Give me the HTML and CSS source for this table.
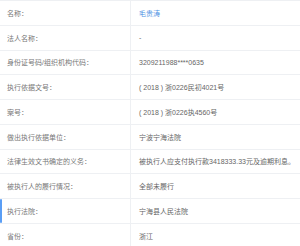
FILE: index.html
```html
<!DOCTYPE html>
<html lang="zh">
<head>
<meta charset="utf-8">
<link rel="stylesheet" href="styles.css">
</head>
<body>
<div class="table">
  <div class="row"><div class="label">名称：</div><div class="value"><a class="link">毛贵涛</a></div></div>
  <div class="row"><div class="label">法人名称：</div><div class="value">-</div></div>
  <div class="row"><div class="label">身份证号码/组织机构代码：</div><div class="value">3209211988****0635</div></div>
  <div class="row"><div class="label">执行依据文号：</div><div class="value">( 2018 ) 浙0226民初4021号</div></div>
  <div class="row"><div class="label">案号：</div><div class="value">( 2018 ) 浙0226执4560号</div></div>
  <div class="row"><div class="label">做出执行依据单位：</div><div class="value">宁波宁海法院</div></div>
  <div class="row"><div class="label">法律生效文书确定的义务：</div><div class="value">被执行人应支付执行款3418333.33元及逾期利息。</div></div>
  <div class="row"><div class="label">被执行人的履行情况：</div><div class="value">全部未履行</div></div>
  <div class="row active"><div class="label">执行法院：</div><div class="value">宁海县人民法院</div></div>
  <div class="row"><div class="label">省份：</div><div class="value">浙江</div></div>
</div>
</body>
</html>
```
FILE: styles.css
```css
html, body {
  margin: 0;
  padding: 0;
  background: #fff;
}
body {
  width: 300px;
  height: 246px;
  overflow: hidden;
  font-family: "Liberation Sans", "Noto Sans CJK SC", sans-serif;
  font-size: 7px;
  color: #666;
}
.table {
  display: flex;
  flex-direction: column;
}
.row {
  position: relative;
  display: flex;
  height: 24.75px;
  box-sizing: border-box;
  border-top: 1px solid #eef0f3;
}
.row.active::before {
  content: "";
  position: absolute;
  left: 0;
  top: 0;
  bottom: 0;
  width: 2px;
  border-radius: 1px;
  background: #5a9ef5;
}
.label {
  width: 131px;
  box-sizing: border-box;
  padding-left: 7px;
  display: flex;
  align-items: center;
  color: #777;
  border-right: 1px solid #eef0f3;
  white-space: nowrap;
}
.value {
  flex: 1;
  padding-left: 8px;
  display: flex;
  align-items: center;
  color: #666;
  white-space: pre;
}
.link {
  color: #4a90e2;
  text-decoration: none;
}
```
